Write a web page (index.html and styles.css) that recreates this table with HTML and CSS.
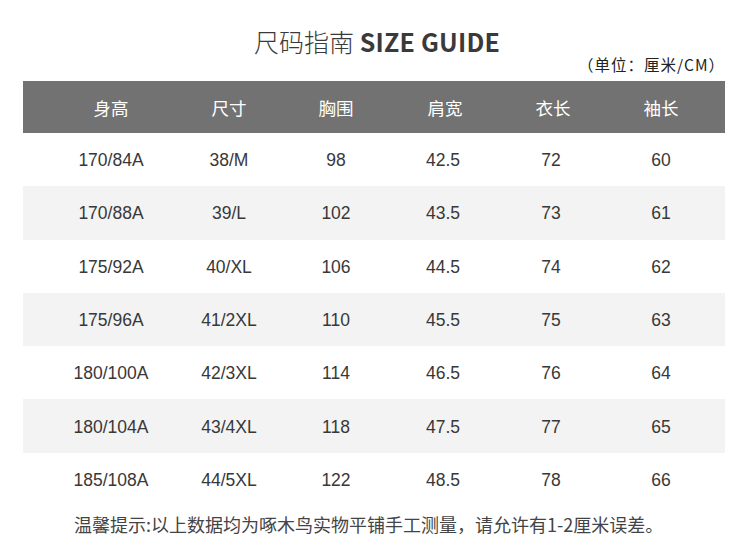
FILE: index.html
```html
<!DOCTYPE html>
<html lang="zh-CN">
<head>
<meta charset="utf-8">
<link rel="stylesheet" href="styles.css">
</head>
<body>
<div class="page">
  <h1 class="title"><span class="title-cn">尺码指南</span> <span class="title-en">SIZE GUIDE</span></h1>
  <div class="unit">（单位：厘米/CM）</div>
  <div class="table">
    <div class="row head">
      <div>身高</div><div>尺寸</div><div>胸围</div><div>肩宽</div><div>衣长</div><div>袖长</div>
    </div>
    <div class="row"><div>170/84A</div><div>38/M</div><div>98</div><div>42.5</div><div>72</div><div>60</div></div>
    <div class="row alt"><div>170/88A</div><div>39/L</div><div>102</div><div>43.5</div><div>73</div><div>61</div></div>
    <div class="row"><div>175/92A</div><div>40/XL</div><div>106</div><div>44.5</div><div>74</div><div>62</div></div>
    <div class="row alt"><div>175/96A</div><div>41/2XL</div><div>110</div><div>45.5</div><div>75</div><div>63</div></div>
    <div class="row"><div>180/100A</div><div>42/3XL</div><div>114</div><div>46.5</div><div>76</div><div>64</div></div>
    <div class="row alt"><div>180/104A</div><div>43/4XL</div><div>118</div><div>47.5</div><div>77</div><div>65</div></div>
    <div class="row"><div>185/108A</div><div>44/5XL</div><div>122</div><div>48.5</div><div>78</div><div>66</div></div>
  </div>
  <p class="note">温馨提示:以上数据均为啄木鸟实物平铺手工测量，请允许有1-2厘米误差。</p>
</div>
</body>
</html>
```

FILE: styles.css
```css
* { box-sizing: border-box; }
html, body { margin: 0; padding: 0; background: #fff; }
body {
  font-family: "Noto Sans CJK SC", "Liberation Sans", sans-serif;
  color: #333;
  width: 750px;
  height: 560px;
  overflow: hidden;
}
.page {
  padding: 0 25px 0 23px;
}
.title {
  margin: 0;
  padding-top: 23px;
  height: 56px;
  text-align: center;
  font-size: 25px;
  line-height: 36px;
  color: #3a3a3a;
  padding-left: 6px;
}
.title-cn { font-weight: 300; }
.title-en { font-weight: 700; letter-spacing: 0.2px; }
.unit {
  text-align: right;
  font-size: 15.5px;
  letter-spacing: 1px;
  line-height: 18px;
  height: 25px;
  margin-top: -1px;
  margin-bottom: 1px;
  padding-right: 0;
  color: #222;
}
.table {
  width: 702px;
}
.row {
  display: grid;
  grid-template-columns: 118px 118px 96px 118px 98px 122px;
  padding-left: 29px;
  height: 53.3px;
  align-items: center;
  font-family: "Liberation Sans", "Noto Sans CJK SC", sans-serif;
  font-size: 17.5px;
  color: #383838;
}
.row > div { text-align: center; padding-top: 2px; }
.row.head {
  height: 52px;
  background: #727272;
  color: #fff;
  font-family: "Noto Sans CJK SC", sans-serif;
  font-size: 17.5px;
}
.row.head > div { padding-top: 0; }
.row.head > div:nth-child(4) { padding-left: 4px; }
.row.head > div:nth-child(5) { padding-left: 4px; }
.row.alt { background: #f3f3f3; }
.note {
  margin: 0;
  padding-left: 51px;
  margin-top: 6px;
  font-size: 18px;
  line-height: 24px;
  color: #444;
}
```
